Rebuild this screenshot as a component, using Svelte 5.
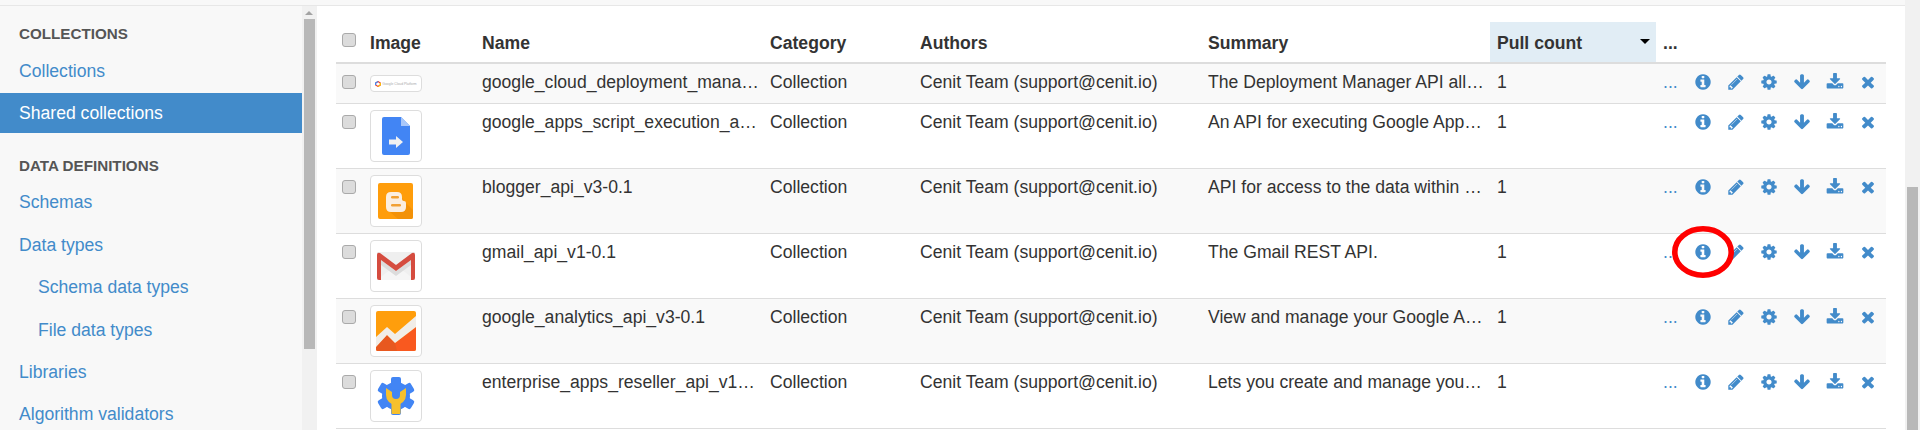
<script>
  const nav = [
    { head: 'COLLECTIONS' },
    { label: 'Collections' },
    { label: 'Shared collections', active: true },
    { head: 'DATA DEFINITIONS' },
    { label: 'Schemas' },
    { label: 'Data types' },
    { label: 'Schema data types', sub: true },
    { label: 'File data types', sub: true },
    { label: 'Libraries' },
    { label: 'Algorithm validators' }
  ];

  const rows = [
    { logo: 'cloud', name: 'google_cloud_deployment_manager_v2-0.1', summary: 'The Deployment Manager API allows you to create' },
    { logo: 'script', name: 'google_apps_script_execution_api_v1-0.1', summary: 'An API for executing Google Apps Script functions' },
    { logo: 'blogger', name: 'blogger_api_v3-0.1', summary: 'API for access to the data within Blogger accounts' },
    { logo: 'gmail', name: 'gmail_api_v1-0.1', summary: 'The Gmail REST API.' },
    { logo: 'analytics', name: 'google_analytics_api_v3-0.1', summary: 'View and manage your Google Analytics data and more' },
    { logo: 'reseller', name: 'enterprise_apps_reseller_api_v1-0.1', summary: 'Lets you create and manage your customers and more' }
  ];

  // font awesome 4 glyphs, 1792 box
  const icons = [
    'M1152 1376v-160q0-14-9-23t-23-9h-96v-512q0-14-9-23t-23-9h-320q-14 0-23 9t-9 23v160q0 14 9 23t23 9h96v320h-96q-14 0-23 9t-9 23v160q0 14 9 23t23 9h448q14 0 23-9t9-23zm-128-896v-160q0-14-9-23t-23-9h-192q-14 0-23 9t-9 23v160q0 14 9 23t23 9h192q14 0 23-9t9-23zm640 416q0 209-103 385.5t-279.5 279.5-385.5 103-385.5-103-279.5-279.5-103-385.5 103-385.5 279.5-279.5 385.5-103 385.5 103 279.5 279.5 103 385.5z',
    'M491 1536l91-91-235-235-91 91v107h128v128h107zm523-928q0-22-22-22-10 0-17 7l-542 542q-7 7-7 17 0 22 22 22 10 0 17-7l542-542q7-7 7-17zm-54-192l416 416-832 832h-416v-416zm683 96q0 53-37 90l-166 166-416-416 166-165q36-38 90-38 53 0 91 38l235 234q37 39 37 91z',
    'M1152 896q0-106-75-181t-181-75-181 75-75 181 75 181 181 75 181-75 75-181zm512-109v222q0 12-8 23t-20 13l-185 28q-19 54-39 91 35 50 107 138 10 12 10 25t-9 23q-27 37-99 108t-94 71q-12 0-26-9l-138-108q-44 23-91 38-16 136-29 186-7 28-36 28h-222q-14 0-24.5-8.5t-11.5-21.5l-28-184q-49-16-90-37l-141 107q-10 9-25 9-14 0-25-11-126-114-165-168-7-10-7-23 0-12 8-23 15-21 51-66.5t54-70.5q-27-50-41-99l-183-27q-13-2-21-12.5t-8-23.5v-222q0-12 8-23t19-13l186-28q14-46 39-92-40-57-107-138-10-12-10-24 0-10 9-23 26-36 98.5-107.5t94.5-71.5q13 0 26 10l138 107q44-23 91-38 16-136 29-186 7-28 36-28h222q14 0 24.5 8.5t11.5 21.5l28 184q49 16 90 37l142-107q9-9 24-9 13 0 25 10 129 119 165 170 7 8 7 22 0 12-8 23-15 21-51 66.5t-54 70.5q26 50 41 98l183 28q13 2 21 12.5t8 23.5z',
    'M1675 832q0 53-37 90l-651 652q-39 37-91 37-53 0-90-37l-651-652q-38-36-38-90 0-53 38-91l74-75q39-37 91-37 53 0 90 37l294 294v-704q0-52 38-90t90-38h128q52 0 90 38t38 90v704l294-294q37-37 90-37 52 0 91 37l75 75q37 39 37 91z',
    'M1344 1344q0-26-19-45t-45-19-45 19-19 45 19 45 45 19 45-19 19-45zm256 0q0-26-19-45t-45-19-45 19-19 45 19 45 45 19 45-19 19-45zm128-224v320q0 40-28 68t-68 28h-1472q-40 0-68-28t-28-68v-320q0-40 28-68t68-28h465l135 136q58 56 136 56t136-56l136-136h464q40 0 68 28t28 68zm-325-569q17 41-14 70l-448 448q-18 19-45 19t-45-19l-448-448q-31-29-14-70 17-39 59-39h256v-448q0-26 19-45t45-19h256q26 0 45 19t19 45v448h256q42 0 59 39z',
    'M1490 1322q0 40-28 68l-136 136q-28 28-68 28t-68-28l-294-294-294 294q-28 28-68 28t-68-28l-136-136q-28-28-28-68t28-68l294-294-294-294q-28-28-28-68t28-68l136-136q28-28 68-28t68 28l294 294 294-294q28-28 68-28t68 28l136 136q28 28 28 68t-28 68l-294 294 294 294q28 28 28 68z'
  ];
</script>

<div class="page">
  <div class="content">
    <div class="topstrip"></div>
    <div class="columns">
      <nav class="sidebar">
        {#each nav as item}
          {#if item.head}
            <div class="nav-head">{item.head}</div>
          {:else}
            <a class="nav-link" class:active={item.active} class:sub={item.sub} href="#top">{item.label}</a>
          {/if}
        {/each}
      </nav>
      <div class="scrollbar side">
        <div class="arrow"></div>
        <div class="thumb"></div>
      </div>
      <main class="main">
        <table>
          <colgroup>
            <col style="width:27px" />
            <col style="width:112px" />
            <col style="width:288px" />
            <col style="width:150px" />
            <col style="width:288px" />
            <col style="width:289px" />
            <col style="width:166px" />
            <col />
          </colgroup>
          <thead>
            <tr>
              <th><input type="checkbox" /></th>
              <th>Image</th>
              <th>Name</th>
              <th>Category</th>
              <th>Authors</th>
              <th>Summary</th>
              <th class="sorted">Pull count<span class="caret"></span></th>
              <th>...</th>
            </tr>
          </thead>
          <tbody>
            {#each rows as row}
              <tr>
                <td><input type="checkbox" /></td>
                <td>
                  <span class="thumbnail" class:wide={row.logo === 'cloud'}>
                    {#if row.logo === 'cloud'}
                      <svg class="mini" viewBox="0 0 10 10" width="6" height="6">
                        <path d="M5 1 9 3.3 9 6.7 5 9 1 6.7 1 3.3Z" fill="none" stroke="#ea4335" stroke-width="2" />
                        <path d="M9 3.3 9 6.7 5 9" fill="none" stroke="#fbbc05" stroke-width="2" />
                        <path d="M1 6.7 1 3.3 5 1" fill="none" stroke="#4285f4" stroke-width="2" />
                      </svg>
                      <span class="tiny">Google Cloud Platform</span>
                    {:else if row.logo === 'script'}
                      <svg viewBox="0 0 50 50" width="50" height="50">
                        <path d="M11 8Q11 6 13 6H30L39 15V42Q39 44 37 44H13Q11 44 11 42Z" fill="#4285f4" />
                        <path d="M30 6 39 15H30Z" fill="#a8c7fa" />
                        <path d="M18 28.5H25V25L32 31 25 37V33.5H18Z" fill="#f1f1f1" />
                      </svg>
                    {:else if row.logo === 'blogger'}
                      <svg viewBox="0 0 50 50" width="50" height="50">
                        <rect x="7" y="7" width="35" height="36" rx="2" fill="#ff9d0b" />
                        <path d="M27 43 19 36 31 22 35 27 42 34V41Q42 43 40 43Z" fill="#f39208" />
                        <path d="M20 16H26Q31 16 31 21V23Q31 25 33 25 35 25 35 27V31Q35 36 30 36H20Q15 36 15 31V21Q15 16 20 16Z" fill="#fbeee0" />
                        <rect x="20" y="20" width="8" height="2.4" rx="1.2" fill="#f2a033" />
                        <rect x="20" y="28" width="10" height="2.4" rx="1.2" fill="#f2a033" />
                      </svg>
                    {:else if row.logo === 'gmail'}
                      <svg viewBox="0 0 50 50" width="50" height="50">
                        <path d="M6 11H44V39H6Z" fill="#efefef" />
                        <path d="M6 39 25 24 44 39Z" fill="#f5f5f5" />
                        <path d="M10 19 25 30 40 19V24L25 35 10 24Z" fill="#dcdcdc" />
                        <path d="M6 14Q6 11 9 12L25 24 41 12Q44 11 44 14V37Q44 39 42 39H40V19L25 30 10 19V39H8Q6 39 6 37Z" fill="#d54c3f" />
                      </svg>
                    {:else if row.logo === 'analytics'}
                      <svg viewBox="0 0 50 50" width="50" height="50">
                        <defs>
                          <clipPath id="ga"><rect x="5" y="5" width="40" height="40" rx="2" /></clipPath>
                        </defs>
                        <g clip-path="url(#ga)">
                          <rect x="5" y="5" width="40" height="40" fill="#ff9e0c" />
                          <path d="M5 45V41L16 29 24 37 45 21V45Z" fill="#f9591f" />
                          <path d="M5 45V41L16 29 24 37 26 45Z" fill="#e8581f" />
                          <path d="M5 31 16 21 24 28 45 10V21L24 37 16 29 5 41Z" fill="#f1ede8" />
                        </g>
                      </svg>
                    {:else}
                      <svg viewBox="0 0 50 50" width="50" height="50">
                        <g fill="#4285f4">
                          <circle cx="25" cy="25" r="14" />
                          <rect x="20" y="6" width="10" height="38" rx="2" />
                          <rect x="20" y="6" width="10" height="38" rx="2" transform="rotate(60 25 25)" />
                          <rect x="20" y="6" width="10" height="38" rx="2" transform="rotate(120 25 25)" />
                        </g>
                        <path d="M15 17V24A10 10 0 0 0 35 24V17L29 21V24A4 4 0 0 1 21 24V21Z" fill="#f6c02d" />
                        <rect x="20.5" y="31" width="9" height="12" rx="1" fill="#f6c02d" />
                      </svg>
                    {/if}
                  </span>
                </td>
                <td class="clip">{row.name}</td>
                <td>Collection</td>
                <td class="clip">Cenit Team (support@cenit.io)</td>
                <td class="clip">{row.summary}</td>
                <td>1</td>
                <td>
                  <div class="actions">
                    <a class="more" href="#top">...</a>
                    {#each icons as d}
                      <svg class="icon" viewBox="0 0 1792 1792" width="18" height="18"><path {d} /></svg>
                    {/each}
                  </div>
                </td>
              </tr>
            {/each}
          </tbody>
        </table>
        <svg class="callout" width="66" height="56" viewBox="0 0 66 56">
          <ellipse cx="33" cy="28" rx="28.2" ry="23.2" fill="none" stroke="#f00" stroke-width="5.6" />
        </svg>
      </main>
    </div>
  </div>
  <div class="scrollbar page-bar">
    <div class="thumb"></div>
  </div>
</div>

<style>
  :global(body) {
    margin: 0;
    background: #fff;
  }

  .page {
    display: flex;
    height: 430px;
    overflow: hidden;
    font-family: "Liberation Sans", Arial, sans-serif;
    font-size: 17.6px;
    color: #333;
  }

  .content {
    flex: 1;
    min-width: 0;
  }

  .topstrip {
    height: 5px;
    background: #f8f8f8;
    border-bottom: 1px solid #e7e7e7;
  }

  .columns {
    display: flex;
    height: 424px;
  }

  .sidebar {
    flex: 0 0 302px;
    background: #f8f8f8;
    padding-top: 15px;
    overflow: hidden;
  }

  .nav-head {
    padding: 4px 19px;
    height: 18px;
    line-height: 18px;
    font-size: 15.2px;
    font-weight: bold;
    color: #555;
  }

  .nav-link {
    display: block;
    height: 40px;
    line-height: 40px;
    padding: 0 19px;
    margin-bottom: 2.4px;
    color: #428bca;
    text-decoration: none;
  }

  .nav-link.active {
    background: #428bca;
    color: #fff;
  }

  .nav-link.sub {
    padding-left: 38px;
  }

  .nav-link + .nav-head {
    margin-top: 20px;
  }

  .nav-head + .nav-link {
    margin-top: 4px;
  }

  .nav-link + .nav-head + .nav-link {
    margin-top: 3px;
  }

  .scrollbar {
    flex: 0 0 15px;
    background: #f1f1f1;
  }

  .scrollbar .thumb {
    width: 11px;
    margin-left: 2px;
    background: #b8b8b8;
  }

  .side .thumb {
    height: 330px;
  }

  .page-bar .thumb {
    height: 243px;
    margin-top: 187px;
  }

  .arrow {
    width: 0;
    height: 0;
    margin: 5px 0 0 3px;
    border: 4px solid transparent;
    border-top: 0;
    border-bottom: 4px solid #a3a3a3;
    margin-bottom: 4px;
  }

  .main {
    flex: 1;
    position: relative;
    min-width: 0;
    padding: 16px 19px 0;
    background: #fff;
  }

  table {
    width: 1550px;
    table-layout: fixed;
    border-collapse: collapse;
  }

  th {
    height: 37px;
    padding: 3px 7px 0;
    text-align: left;
    font-weight: bold;
    border-bottom: 2px solid #ddd;
    vertical-align: middle;
    position: relative;
  }

  th.sorted {
    background: #e1edf5;
  }

  .caret {
    position: absolute;
    right: 6px;
    top: 17px;
    width: 0;
    height: 0;
    border: 5px solid transparent;
    border-top-color: #000;
    border-bottom: 0;
  }

  td {
    padding: 6px 7px;
    height: 52px;
    line-height: 24px;
    vertical-align: top;
    border-bottom: 1px solid #ddd;
  }

  tbody tr:first-child td {
    height: 27px;
  }

  tbody tr:nth-child(odd) td {
    background: #f9f9f9;
  }

  td.clip {
    padding-right: 4px;
    overflow: hidden;
    white-space: nowrap;
    text-overflow: ellipsis;
  }

  input[type="checkbox"] {
    appearance: none;
    display: block;
    box-sizing: border-box;
    width: 14px;
    height: 14px;
    margin: 5px 0 0 -1px;
    background: #dcdcdc;
    border: 1px solid #aaa;
    border-radius: 3px;
  }

  th input[type="checkbox"] {
    margin: -7px 0 0 -1px;
  }

  .thumbnail {
    display: flex;
    align-items: center;
    justify-content: center;
    box-sizing: border-box;
    width: 52px;
    height: 52px;
    background: #fff;
    border: 1px solid #ddd;
    border-radius: 4px;
  }

  .thumbnail.wide {
    height: 17px;
    margin-top: 5px;
    gap: 1px;
  }

  .mini {
    flex: none;
  }

  .tiny {
    font-size: 3.4px;
    line-height: 6px;
    color: #aaa;
    white-space: nowrap;
  }

  .actions {
    display: flex;
    align-items: center;
    height: 24px;
    gap: 15px;
  }

  .more {
    width: 16px;
    color: #428bca;
    text-decoration: none;
  }

  .icon {
    flex: none;
    fill: #428bca;
  }

  .callout {
    position: absolute;
    left: 1353px;
    top: 218px;
  }
</style>
